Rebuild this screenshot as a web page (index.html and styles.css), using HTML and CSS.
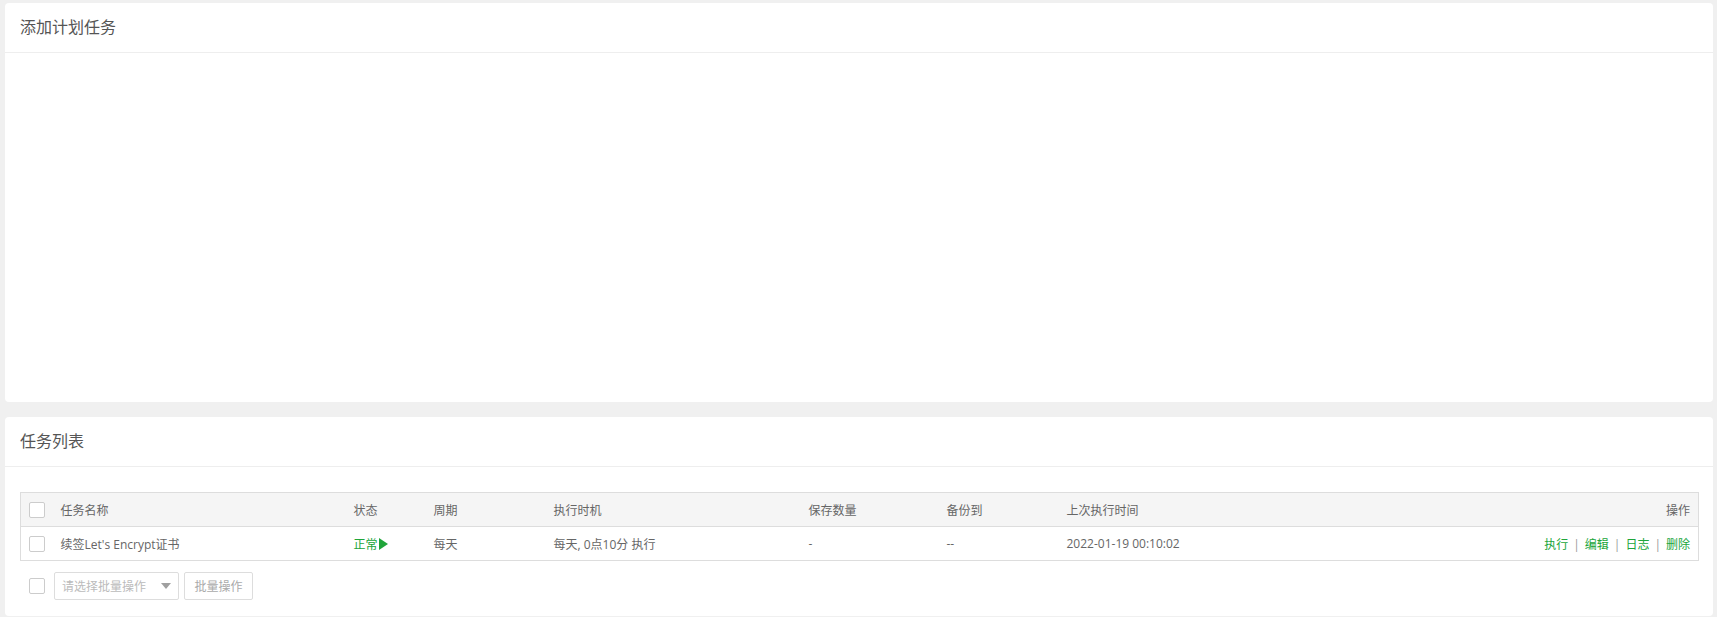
FILE: index.html
```html
<!DOCTYPE html>
<html lang="zh-CN">
<head>
<meta charset="utf-8">
<title>计划任务</title>
<link rel="stylesheet" href="styles.css">
</head>
<body>
<div class="card">
  <div class="card-head">添加计划任务</div>
  <div class="card-body add-body"></div>
</div>
<div class="card">
  <div class="card-head">任务列表</div>
  <div class="card-body list-body">
    <table class="task-table">
      <colgroup>
        <col class="c-check">
        <col class="c-name">
        <col class="c-status">
        <col class="c-cycle">
        <col class="c-timing">
        <col class="c-save">
        <col class="c-backup">
        <col class="c-last">
        <col class="c-ops">
      </colgroup>
      <thead>
        <tr>
          <th class="cell-check"><span class="checkbox"></span></th>
          <th>任务名称</th>
          <th>状态</th>
          <th>周期</th>
          <th>执行时机</th>
          <th>保存数量</th>
          <th>备份到</th>
          <th>上次执行时间</th>
          <th class="cell-ops">操作</th>
        </tr>
      </thead>
      <tbody>
        <tr>
          <td class="cell-check"><span class="checkbox"></span></td>
          <td>续签Let's Encrypt证书</td>
          <td><span class="status">正常<svg class="play" width="9" height="12" viewBox="0 0 9 12"><path d="M0 0L9 6L0 12Z" fill="#20a53a"/></svg></span></td>
          <td>每天</td>
          <td>每天, 0点10分 执行</td>
          <td>-</td>
          <td>--</td>
          <td>2022-01-19 00:10:02</td>
          <td class="cell-ops"><a class="op">执行</a><span class="sep">|</span><a class="op">编辑</a><span class="sep">|</span><a class="op">日志</a><span class="sep">|</span><a class="op">删除</a></td>
        </tr>
      </tbody>
    </table>
    <div class="batch">
      <span class="checkbox"></span>
      <div class="select">
        <span class="placeholder">请选择批量操作</span>
        <svg class="caret" width="10" height="6" viewBox="0 0 10 6"><path d="M0 0H10L5 6Z" fill="#a0a0a0"/></svg>
      </div>
      <button class="btn">批量操作</button>
    </div>
  </div>
</div>
</body>
</html>
```

FILE: styles.css
```css
html, body {
  margin: 0;
  background: #f0f0f0;
}
body {
  padding: 3px 4px 0 5px;
  font-family: "Open Sans", "Noto Sans CJK SC", sans-serif;
  color: #666;
  font-size: 12px;
}
.card {
  background: #fff;
  border-radius: 4px;
  margin-bottom: 15px;
}
.card-head {
  height: 49px;
  line-height: 49px;
  padding: 0 15px;
  font-size: 16px;
  color: #555;
  border-bottom: 1px solid #eee;
}
.add-body {
  height: 349px;
}
.list-body {
  padding: 25px 14px 16px 15px;
}
.task-table {
  width: 100%;
  border-collapse: collapse;
  table-layout: fixed;
  border: 1px solid #ddd;
}
.c-check { width: 30px; }
.c-name { width: 293px; }
.c-status { width: 80px; }
.c-cycle { width: 120px; }
.c-timing { width: 255px; }
.c-save { width: 138px; }
.c-backup { width: 120px; }
.c-last { width: 260px; }
.task-table th,
.task-table td {
  height: 33px;
  padding: 0 10px;
  text-align: left;
  font-weight: normal;
  color: #666;
  white-space: nowrap;
  vertical-align: middle;
}
.task-table thead tr {
  background: #f5f5f5;
  border-bottom: 1px solid #ddd;
}
.task-table th.cell-check,
.task-table td.cell-check {
  padding: 0 0 0 8px;
}
.task-table .cell-ops {
  text-align: right;
  padding-right: 8px;
}
.checkbox {
  display: inline-block;
  width: 14px;
  height: 14px;
  border: 1px solid #ccc;
  border-radius: 2px;
  background: #fff;
  vertical-align: middle;
}
.status {
  color: #20a53a;
  display: inline-flex;
  align-items: center;
}
.play {
  margin-left: 1px;
}
.op {
  color: #20a53a;
  cursor: pointer;
}
.sep {
  color: #999;
  margin: 0 5px;
}
.batch {
  display: flex;
  align-items: center;
  margin-top: 11px;
  padding-left: 9px;
}
.batch .checkbox {
  margin-right: 9px;
}
.select {
  box-sizing: border-box;
  width: 125px;
  height: 28px;
  border: 1px solid #ddd;
  border-radius: 2px;
  display: flex;
  align-items: center;
  justify-content: space-between;
  padding: 0 6px 0 7px;
  color: #bbb;
}
.caret {
  margin-right: 1px;
}
.btn {
  box-sizing: border-box;
  margin-left: 5px;
  width: 69px;
  height: 28px;
  border: 1px solid #ddd;
  border-radius: 2px;
  background: #fff;
  color: #aaa;
  font-family: inherit;
  font-size: 12px;
  padding: 0;
}
```
